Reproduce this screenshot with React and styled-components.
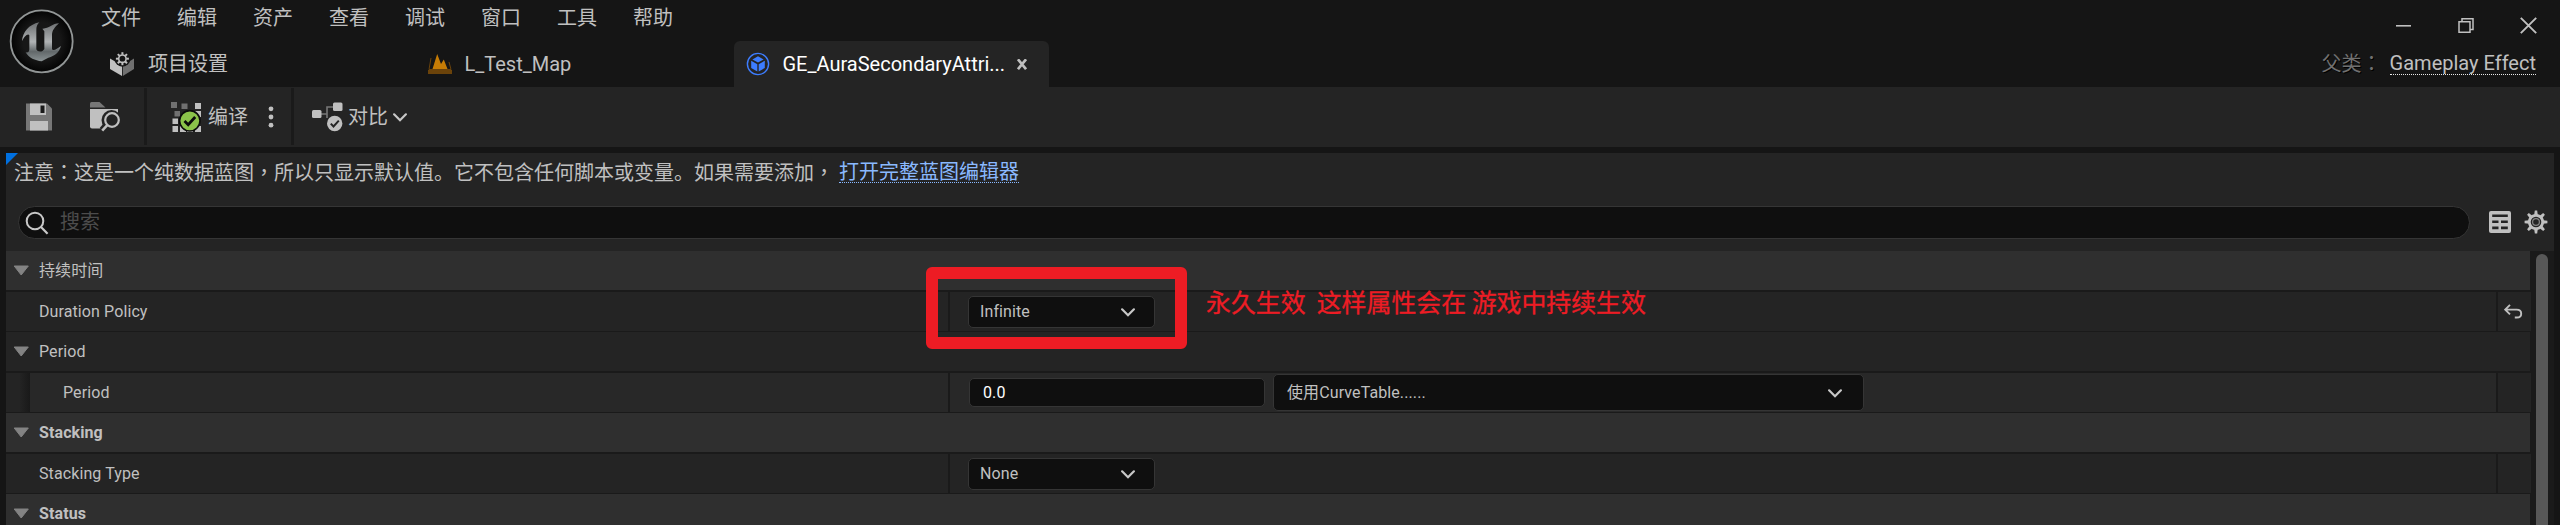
import React from 'react';
import styled, { createGlobalStyle, css } from 'styled-components';

const GlobalStyle = createGlobalStyle`
  *, *::before, *::after { box-sizing: border-box; }
  html, body { margin: 0; background: #151515; overflow: hidden; }
  body { font-family: Roboto, "Noto Sans CJK SC", sans-serif; color: #c0c0c0; }
`;

const Window = styled.div`
  position: relative;
  width: 2560px;
  height: 525px;
  overflow: hidden;
  display: flex;
  flex-direction: column;
  background: #151515;
  font-size: 20px;
  line-height: 24px;
  white-space: nowrap;
`;

const TitleBar = styled.header`
  height: 87px;
  flex: none;
  display: flex;
`;

const LogoBox = styled.div`
  width: 98px;
  flex: none;
`;

const TitleMain = styled.div`
  flex: 1;
  display: flex;
  flex-direction: column;
  justify-content: space-between;
`;

const MenuBar = styled.nav`
  display: flex;
  gap: 36px;
  padding: 6px 0 0 3px;
`;

const MenuItem = styled.span`
  width: 40px;
`;

const TabStrip = styled.div`
  display: flex;
  gap: 3px;
  height: 46px;
`;

const Tab = styled.div`
  width: 315px;
  display: flex;
  align-items: center;
  padding: 0 22px 0 12px;
  border-radius: 6px 6px 0 0;
  background: ${(p) => (p.$active ? '#242424' : 'transparent')};
  color: ${(p) => (p.$active ? '#fff' : '#c0c0c0')};
`;

const TabLabel = styled.span`
  margin-left: ${(p) => (p.$latin ? 12.5 : 14)}px;
  margin-bottom: 1px;
  flex: 1;
`;

const TitleRight = styled.div`
  width: 260px;
  display: flex;
  flex-direction: column;
`;

const WindowButtons = styled.div`
  display: flex;
  justify-content: flex-end;
  gap: 46px;
  padding: 17px 23px 0 0;
`;

const ParentClass = styled.div`
  display: flex;
  justify-content: flex-end;
  align-items: flex-start;
  padding: 17px 24px 0 0;
  color: #707070;
  text-shadow: 1px 1px 0 #000;
`;

const WideMark = styled.span`
  font-family: "Noto Sans CJK TC", sans-serif;
`;

const ClassLink = styled.span`
  margin-left: 8px;
  height: 24px;
  line-height: 25px;
  color: #c0c0c0;
  text-shadow: none;
  border-bottom: 1px dotted #e8e8e8;
`;

const Toolbar = styled.div`
  height: 60px;
  flex: none;
  display: flex;
  align-items: center;
  background: #242424;
`;

const ToolGroup = styled.div`
  height: 60px;
  display: flex;
  align-items: center;
  width: ${(p) => p.$width}px;
  padding-left: ${(p) => p.$pad}px;
  gap: ${(p) => p.$gap}px;
`;

const ToolDivider = styled.div`
  width: 3px;
  height: 57px;
  margin-bottom: 2px;
  background: #1a1a1a;
`;

const ToolLabel = styled.span`
  width: 40px;
`;

const Panel = styled.main`
  position: relative;
  margin: 6px 6px 0;
  height: 372px;
  display: flex;
  flex-direction: column;
  background: #242424;
`;

const Corner = styled.svg`
  position: absolute;
  left: 0;
  top: 0;
`;

const Notice = styled.div`
  height: 53px;
  padding: 7px 0 0 8px;
  display: flex;
  align-items: flex-start;
`;

const NoticeLink = styled.span`
  margin-left: 5px;
  height: 23px;
  color: #8ab9ff;
  border-bottom: 1px dotted #8ab9ff;
`;

const SearchRow = styled.div`
  height: 45px;
  display: flex;
  align-items: flex-start;
  padding-left: 12px;
`;

const SearchBox = styled.div`
  width: 2452px;
  height: 33px;
  display: flex;
  align-items: center;
  padding-left: 6px;
  border: 1px solid #353535;
  border-radius: 17px;
  background: #0f0f0f;
  color: #4c4c4c;
`;

const SearchHint = styled.span`
  margin: 0 0 2px 11px;
`;

const ViewActions = styled.div`
  display: flex;
  gap: 13px;
  padding: 4px 0 0 19px;
`;

const DetailsArea = styled.div`
  height: 274px;
  display: flex;
  background: #1a1a1a;
  overflow: hidden;
`;

const Rows = styled.div`
  width: 2525px;
  flex: none;
  font-size: 16px;
  line-height: 20px;
  letter-spacing: 0.1px;
`;

const Row = styled.div`
  display: flex;
  align-items: stretch;
  height: 39px;
  margin-bottom: ${(p) => p.$rule}px;
`;

const HeadCell = styled.div`
  width: 2524px;
  display: flex;
  align-items: center;
  gap: 9px;
  padding-left: 7px;
  background: ${(p) => (p.$plain ? '#242424' : '#2f2f2f')};
  font-weight: ${(p) => (p.$bold ? 700 : 400)};
`;

const HeadText = styled.span`
  padding-top: 1px;
`;

const Indent = styled.div`
  width: 24px;
  background: linear-gradient(90deg, #242424 55%, #191919 100%);
`;

const cellBase = css`
  display: flex;
  align-items: center;
  background: ${(p) => (p.$nested ? '#282828' : '#242424')};
`;

const NameCell = styled.div`
  ${cellBase}
  width: ${(p) => (p.$nested ? 918 : 942)}px;
  padding: 1px 0 0 33px;
`;

const ValueCell = styled.div`
  ${cellBase}
  width: 1546px;
  margin-left: 2px;
  padding-left: 18px;
`;

const ResetCell = styled.div`
  width: 33px;
  margin-left: 2px;
  display: flex;
  align-items: center;
  padding-left: 6px;
  background: #242424;
`;

const Combo = styled.div`
  width: ${(p) => p.$width}px;
  height: ${(p) => p.$height || 32}px;
  display: flex;
  align-items: center;
  justify-content: space-between;
  padding: 1px ${(p) => p.$right || 19}px 0 ${(p) => p.$left || 11}px;
  border: 1px solid #353535;
  border-radius: 5px;
  background: #0f0f0f;
`;

const NumberBox = styled.div`
  width: 296px;
  height: 29px;
  margin: 0 8px 0 1px;
  display: flex;
  align-items: center;
  padding: 1px 0 0 13px;
  border: 1px solid #353535;
  border-radius: 5px;
  background: #0f0f0f;
  color: #fff;
`;

const Scrollbar = styled.div`
  width: 12px;
  margin: 3px 0 0 5px;
  height: 290px;
  border-radius: 6px;
  background: #575757;
`;

const Highlight = styled.div`
  position: absolute;
  left: 926px;
  top: 267px;
  width: 261px;
  height: 82px;
  border: 12px solid #ed1c24;
  border-radius: 6px;
`;

const Annotation = styled.div`
  position: absolute;
  left: 1206px;
  top: 286px;
  font-family: "Noto Sans CJK SC", sans-serif;
  font-size: 24.9px;
  line-height: 30px;
  color: #ed1c24;
  -webkit-text-stroke: 0.3px #ed1c24;
  white-space: pre;
`;

const Logo = () => (
  <svg width="84" height="84" viewBox="0 0 252 252">
    <defs>
      <linearGradient id="metal" x1="0" y1="0" x2="0" y2="1">
        <stop offset="0" stopColor="#6b6e70" />
        <stop offset="0.5" stopColor="#b0b3b5" />
        <stop offset="0.75" stopColor="#62686a" />
        <stop offset="1" stopColor="#8a9294" />
      </linearGradient>
      <radialGradient id="disc">
        <stop offset="0.6" stopColor="#171717" />
        <stop offset="1" stopColor="#030303" />
      </radialGradient>
    </defs>
    <circle cx="125" cy="124" r="93" fill="url(#disc)" stroke="#929696" strokeWidth="5.5" />
    <path
      fill="url(#metal)"
      d="M66 124C68 96 86 74 118 67C111 74 109 80 109 90V148C113 157 128 157 133 147V94L127 86C146 87 157 70 177 70C164 82 156 91 156 106V146C158 155 170 148 183 138C177 158 164 168 145 173L125 184C105 182 87 174 77 157C86 158 88 153 88 146V106C85 98 72 108 66 124Z"
    />
  </svg>
);

const cogTeeth = [0, 45, 90, 135, 180, 225, 270, 315];

const ProjectIcon = () => (
  <svg width="24" height="24" viewBox="0 0 24 24">
    <path d="M0 6.5L12 13.5V24L0 17Z" fill="#c0c0c0" />
    <path d="M24 6.5L12.8 13.5V24L24 17Z" fill="#707070" />
    <circle cx="12.4" cy="6.7" r="8" fill="#151515" />
    <circle cx="12.4" cy="6.7" r="3.7" fill="none" stroke="#c0c0c0" strokeWidth="1.6" />
    {cogTeeth.map((a) => (
      <path key={a} d="M12.4 2.7V0.2" stroke="#c0c0c0" strokeWidth="2" transform={`rotate(${a} 12.4 6.7)`} />
    ))}
  </svg>
);

const LevelIcon = () => (
  <svg width="24" height="22" viewBox="0 0 24 22">
    <path d="M3 5L1 16.5H23L21 9" fill="none" stroke="#6b430a" strokeWidth="1" />
    <path d="M0 17H24V21H0Z" fill="#6b430a" />
    <path d="M4.5 16L9.2 1L13 11L15.8 6.5L19.5 16Z" fill="#c67c05" />
  </svg>
);

const BlueprintIcon = () => (
  <svg width="24" height="24" viewBox="0 0 24 24">
    <circle cx="12" cy="12" r="10.6" fill="none" stroke="#3d7dff" strokeWidth="1.4" />
    <path d="M12 4.2L17.6 7.4L12 10.6L6.4 7.4Z" fill="#3d7dff" />
    <path d="M5.2 8.7L11.3 12.2V19.4L5.2 16Z" fill="#3d7dff" />
    <path d="M18.8 8.7L12.7 12.2V19.4L18.8 16Z" fill="#3d7dff" />
  </svg>
);

const CloseTabIcon = () => (
  <svg width="10" height="11" viewBox="0 0 10 11">
    <path d="M1 0.3L9 10.2M9 0.3L1 10.2" stroke="#c0c0c0" strokeWidth="2.6" />
  </svg>
);

const MinimizeIcon = () => (
  <svg width="16" height="17" viewBox="0 0 16 17">
    <path d="M0 8.8H15" stroke="#c0c0c0" strokeWidth="1.6" />
  </svg>
);

const RestoreIcon = () => (
  <svg width="16" height="17" viewBox="0 0 16 17">
    <path d="M1 4.8H12V15.3H1ZM4 4.5V1.8H15V12.6H12.3" fill="none" stroke="#c0c0c0" strokeWidth="1.5" />
  </svg>
);

const CloseIcon = () => (
  <svg width="17" height="17" viewBox="0 0 17 17">
    <path d="M0.8 0.8L16.2 16.2M16.2 0.8L0.8 16.2" stroke="#c0c0c0" strokeWidth="1.9" />
  </svg>
);

const SaveIcon = () => (
  <svg width="26" height="28" viewBox="0 0 26 28">
    <path d="M0 0.5H21L26 5.5V27.5H0Z" fill="#777" />
    <path d="M4 0.5H20V12H4Z" fill="#c0c0c0" />
    <path d="M14.5 2.5H18.5V10H14.5Z" fill="#1a1a1a" />
    <path d="M4 18H22V27.5H4Z" fill="#c0c0c0" />
  </svg>
);

const BrowseIcon = () => (
  <svg width="30" height="30" viewBox="0 0 30 30">
    <path d="M0 5.5V1.5Q0 0 1.5 0H9.5L15.5 5.5Z" fill="#777" />
    <path d="M0 7H28V26.5H2Q0 26.5 0 24.5Z" fill="#c0c0c0" />
    <circle cx="21.5" cy="18" r="10" fill="#242424" />
    <path d="M12 28L17 22" stroke="#242424" strokeWidth="6" />
    <path d="M18 23H30V30H12Z" fill="#242424" />
    <circle cx="22" cy="18" r="6.8" fill="none" stroke="#c0c0c0" strokeWidth="2.2" />
    <path d="M17.3 23.2L12.2 28.6" stroke="#c0c0c0" strokeWidth="2.6" />
  </svg>
);

const CompileIcon = () => (
  <svg width="30" height="30" viewBox="0 0 30 30">
    <path d="M0 0H6V6H0ZM10.5 1.5H16.5V7H10.5ZM3.5 9H9V14.5H3.5Z" fill="#707070" />
    <path d="M24 1H30V7H24ZM1.5 16.5H7V22H1.5ZM1.5 24H7V30H1.5ZM9 24H15V30H9ZM16 24H22V30H16ZM24 24H30V30H24ZM24 9H30V15H24ZM17 9H23V15H17Z" fill="#c0c0c0" />
    <circle cx="18.8" cy="18.8" r="10.2" fill="#8bc34a" stroke="#0c0c0c" strokeWidth="1.6" />
    <path d="M13.5 19L17.2 22.7L24.2 15" fill="none" stroke="#0c0c0c" strokeWidth="2.8" />
  </svg>
);

const DotsIcon = () => (
  <svg width="6" height="22" viewBox="0 0 6 22">
    {[2.8, 11, 19.2].map((y) => (
      <circle key={y} cx="3" cy={y} r="2.4" fill="#c0c0c0" />
    ))}
  </svg>
);

const DiffIcon = () => (
  <svg width="31" height="30" viewBox="0 0 31 30">
    <path d="M8 12H15V5H22M15 12V16" fill="none" stroke="#777" strokeWidth="1.6" />
    <rect x="0" y="8" width="9.5" height="8" rx="1.5" fill="#c0c0c0" />
    <rect x="21" y="0.5" width="9.5" height="8.5" rx="1.5" fill="#c0c0c0" />
    <circle cx="22.7" cy="21.5" r="7.7" fill="#c0c0c0" />
    <path d="M18.8 21.6L21.5 24.5L26.8 18.6" fill="none" stroke="#242424" strokeWidth="2" />
  </svg>
);

const ChevronIcon = () => (
  <svg width="14" height="9" viewBox="0 0 14 9">
    <path d="M1.1 1.3L7 7.3L12.9 1.3" fill="none" stroke="#c8c8c8" strokeWidth="2.2" strokeLinecap="round" />
  </svg>
);

const SearchIcon = () => (
  <svg width="24" height="24" viewBox="0 0 24 24">
    <circle cx="10" cy="10" r="8.3" fill="none" stroke="#c8c8c8" strokeWidth="2" />
    <path d="M16 16L22.6 22.8" stroke="#c8c8c8" strokeWidth="2.2" />
  </svg>
);

const TableIcon = () => (
  <svg width="22" height="24" viewBox="0 0 22 24">
    <rect x="0" y="1" width="22" height="22" rx="2" fill="#c0c0c0" />
    <path d="M3.2 4.6H18.8V7H3.2ZM3.2 10.5H9.5V13.1H3.2ZM12 10.5H18.8V13.1H12ZM3.2 16.6H9.5V19.3H3.2ZM12 16.6H18.8V19.3H12Z" fill="#242424" />
  </svg>
);

const GearIcon = () => (
  <svg width="24" height="24" viewBox="0 0 24 24">
    <circle cx="12" cy="12" r="6.7" fill="none" stroke="#c0c0c0" strokeWidth="2.8" />
    <circle cx="12" cy="12" r="3.4" fill="none" stroke="#858585" strokeWidth="1.2" />
    {cogTeeth.map((a) => (
      <path key={a} d="M10.2 5L10.8 0.6H13.2L13.8 5Z" fill="#c0c0c0" transform={`rotate(${a} 12 12)`} />
    ))}
  </svg>
);

const ExpandArrow = () => (
  <svg width="17" height="11" viewBox="0 0 17 11">
    <path d="M1.2 1H15.3L8.2 10Z" fill="#838383" stroke="#838383" strokeLinejoin="round" />
  </svg>
);

const ResetIcon = () => (
  <svg width="19" height="15" viewBox="0 0 19 15">
    <path d="M6 0.8L1.2 5.6L6 10.4M1.6 5.6H12.6Q17.2 5.6 17.2 9.7Q17.2 13.5 12.8 13.5H10.8" fill="none" stroke="#c0c0c0" strokeWidth="1.9" />
  </svg>
);

const menus = ['文件', '编辑', '资产', '查看', '调试', '窗口', '工具', '帮助'];

const Category = ({ children, rule = 2, bold, plain }) => (
  <Row $rule={rule}>
    <HeadCell $bold={bold} $plain={plain}>
      <ExpandArrow />
      <HeadText>{children}</HeadText>
    </HeadCell>
  </Row>
);

const Property = ({ name, nested, reset, children }) => (
  <Row $rule={1}>
    {nested && <Indent />}
    <NameCell $nested={nested}>{name}</NameCell>
    <ValueCell $nested={nested}>{children}</ValueCell>
    <ResetCell>{reset && <ResetIcon />}</ResetCell>
  </Row>
);

export default function App() {
  return (
    <>
      <GlobalStyle />
      <Window>
        <TitleBar>
          <LogoBox><Logo /></LogoBox>
          <TitleMain>
            <MenuBar>{menus.map((m) => <MenuItem key={m}>{m}</MenuItem>)}</MenuBar>
            <TabStrip>
              <Tab><ProjectIcon /><TabLabel>项目设置</TabLabel></Tab>
              <Tab><LevelIcon /><TabLabel $latin>L_Test_Map</TabLabel></Tab>
              <Tab $active><BlueprintIcon /><TabLabel $latin>GE_AuraSecondaryAttri...</TabLabel><CloseTabIcon /></Tab>
            </TabStrip>
          </TitleMain>
          <TitleRight>
            <WindowButtons><MinimizeIcon /><RestoreIcon /><CloseIcon /></WindowButtons>
            <ParentClass>
              <span>父类<WideMark>：</WideMark></span>
              <ClassLink>Gameplay Effect</ClassLink>
            </ParentClass>
          </TitleRight>
        </TitleBar>
        <Toolbar>
          <ToolGroup $width={144} $pad={26} $gap={38}><SaveIcon /><BrowseIcon /></ToolGroup>
          <ToolDivider />
          <ToolGroup $width={144} $pad={24} $gap={7}>
            <CompileIcon /><ToolLabel>编译</ToolLabel>
            <ToolGroup $pad={13}><DotsIcon /></ToolGroup>
          </ToolGroup>
          <ToolDivider />
          <ToolGroup $pad={18} $gap={5}><DiffIcon /><ToolLabel>对比</ToolLabel><ChevronIcon /></ToolGroup>
        </Toolbar>
        <Panel>
          <Corner width="12" height="12"><path d="M0 0H12L0 12Z" fill="#0070e0" /></Corner>
          <Notice>
            <span>
              注意<WideMark>：</WideMark>这是一个纯数据蓝图<WideMark>，</WideMark>所以只显示默认值。它不包含任何脚本或变量。如果需要添加<WideMark>，</WideMark>
            </span>
            <NoticeLink>打开完整蓝图编辑器</NoticeLink>
          </Notice>
          <SearchRow>
            <SearchBox><SearchIcon /><SearchHint>搜索</SearchHint></SearchBox>
            <ViewActions><TableIcon /><GearIcon /></ViewActions>
          </SearchRow>
          <DetailsArea>
            <Rows>
              <Category>持续时间</Category>
              <Property name="Duration Policy" reset>
                <Combo $width={187}>Infinite<ChevronIcon /></Combo>
              </Property>
              <Category plain>Period</Category>
              <Property name="Period" nested>
                <NumberBox>0.0</NumberBox>
                <Combo $width={591} $height={37} $left={13} $right={21}>使用CurveTable......<ChevronIcon /></Combo>
              </Property>
              <Category bold>Stacking</Category>
              <Property name="Stacking Type">
                <Combo $width={187}>None<ChevronIcon /></Combo>
              </Property>
              <Category bold>Status</Category>
            </Rows>
            <Scrollbar />
          </DetailsArea>
        </Panel>
        <Highlight />
        <Annotation>永久生效  这样属性会在 游戏中持续生效</Annotation>
      </Window>
    </>
  );
}
